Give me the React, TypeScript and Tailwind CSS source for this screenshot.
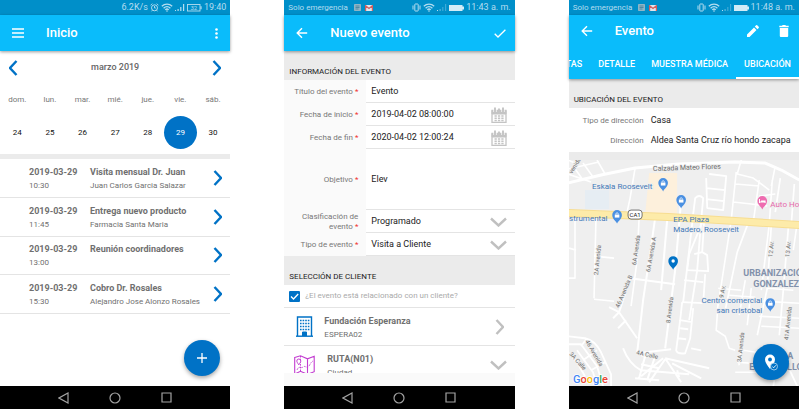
import React from "react";

type IconProps = { className?: string };

function Chevron({ className = "", dir = "right" }: IconProps & { dir?: "right" | "left" | "down" }) {
  const d = { right: "M1.5 1 8 8 1.5 15", left: "M7.5 1 1 8 7.5 15", down: "M1 1.5 8.5 8.5 16 1.5" }[dir];
  const box = dir === "down" ? "0 0 17 10" : "0 0 9 16";
  const size = dir === "down" ? "h-2.5 w-[17px]" : "h-4 w-[9px]";
  return (
    <svg viewBox={box} className={`${size} shrink-0 ${className}`} fill="none" stroke="currentColor" strokeWidth="2.4" aria-hidden="true">
      <path d={d} />
    </svg>
  );
}

function Wifi() {
  return (
    <svg viewBox="0 0 12 9" className="h-[9px] w-3" fill="none" stroke="currentColor" aria-hidden="true">
      <path d="M.8 3.2C3.8.3 8.2.3 11.2 3.2M2.6 5.2c2-1.9 4.8-1.9 6.8 0M4.3 6.9c1-1 2.4-1 3.4 0" strokeWidth="1.3" />
      <circle cx="6" cy="8" r=".8" fill="currentColor" stroke="none" />
    </svg>
  );
}

function Signal({ level = 4 }: { level?: number }) {
  return (
    <svg viewBox="0 0 10 9" className="h-[9px] w-2.5" fill="currentColor" aria-hidden="true">
      <path d="M0 7h1v1H0z" />
      <path d="M2.5 6h1.2v2H2.5z" opacity={level > 1 ? 1 : 0.5} />
      <path d="M5.2 4h1.2v4H5.2z" opacity={level > 1 ? 1 : 0.35} />
      <path d="M8 1h1.2v7H8z" opacity={level > 1 ? 1 : 0.35} />
    </svg>
  );
}

function AlarmIcon() {
  return (
    <svg viewBox="0 0 9 9" className="size-[9px]" fill="none" stroke="currentColor" aria-hidden="true">
      <circle cx="4.5" cy="4.8" r="3" />
      <path d="M.6 2.2 2.4.7M8.4 2.2 6.6.7M4.5 3v2h1.4M2.4 7.2 1.6 8.3M6.6 7.2l.8 1.1" strokeWidth=".9" />
    </svg>
  );
}

function BatteryLow() {
  return (
    <svg viewBox="0 0 15 9" className="h-[9px] w-[15px]" aria-hidden="true">
      <rect x=".5" y="1.5" width="12.5" height="6.5" fill="none" stroke="currentColor" strokeWidth=".9" />
      <path d="M13.4 3.2h1.2v3h-1.2z" fill="currentColor" />
      <text x="6.8" y="6.9" fontSize="6" textAnchor="middle" fill="currentColor">32</text>
    </svg>
  );
}

function EmergencyStatus({ time }: { time: string }) {
  return (
    <div className="flex h-[15px] items-center bg-[#008fc9] pr-1 pl-1 text-[9px] text-[#b4ddf0]">
      <span className="text-[8px] whitespace-nowrap">Solo emergencia</span>
      <svg viewBox="0 0 7 7" className="ml-1.5 size-[7px]" aria-hidden="true">
        <rect width="7" height="7" rx=".8" fill="#8fb5c6" />
        <path d="M1.5 2h4M1.5 3.5h4M1.5 5h3" stroke="#3f7f9b" strokeWidth=".8" />
      </svg>
      <svg viewBox="0 0 8 6" className="ml-1 h-1.5 w-2" aria-hidden="true">
        <rect width="8" height="6" rx=".6" fill="#dfe7ee" />
        <path d="M.6 6V.7L4 3.5 7.4.7V6" fill="none" stroke="#d2605f" strokeWidth="1.2" />
      </svg>
      <span className="ml-auto flex items-center gap-0.5">
        <svg viewBox="0 0 9 9" className="size-[9px]" fill="none" stroke="currentColor" aria-hidden="true">
          <rect x="2.8" y="1" width="3.4" height="7" rx=".5" />
          <path d="M1 2.5v4M8 2.5v4" />
        </svg>
        <Wifi />
        <Signal level={1} />
        <svg viewBox="0 0 15 8" className="h-2 w-[15px]" fill="#d3ecf7" aria-hidden="true">
          <path d="M0 1h13.5v1.6H15v3h-1.5V7H0z" />
        </svg>
        <span className="text-[9px] whitespace-nowrap">{time}</span>
      </span>
    </div>
  );
}

function BackButton() {
  return (
    <button aria-label="Atrás" className="flex w-[36px] items-center justify-center">
      <svg viewBox="0 0 12 12" className="size-3" fill="none" stroke="currentColor" strokeWidth="1.4" aria-hidden="true">
        <path d="M11.2 6H1.4M6 1.2 1.2 6 6 10.8" />
      </svg>
    </button>
  );
}

function NavBar() {
  return (
    <nav className="flex h-[23px] shrink-0 items-center justify-center gap-10 bg-black text-[#a3a3a3]">
      <button aria-label="Volver">
        <svg viewBox="0 0 11 12" className="h-3 w-[11px]" fill="none" stroke="currentColor" strokeWidth="1.2"><path d="M10 1v10L1 6z" /></svg>
      </button>
      <button aria-label="Pantalla de inicio">
        <svg viewBox="0 0 12 12" className="size-3" fill="none" stroke="currentColor" strokeWidth="1.2"><circle cx="6" cy="6" r="5" /></svg>
      </button>
      <button aria-label="Recientes">
        <svg viewBox="0 0 11 11" className="size-[11px]" fill="none" stroke="currentColor" strokeWidth="1.2"><path d="M1 1h9v9H1z" /></svg>
      </button>
    </nav>
  );
}

function SectionTitle({ children }: { children: React.ReactNode }) {
  return (
    <h2 className="flex h-[29px] items-end bg-[#ebebeb] px-[5px] pb-0.5 text-[8px] leading-3 text-[#222]">{children}</h2>
  );
}

const days = [
  ["dom.", "24"], ["lun.", "25"], ["mar.", "26"], ["mié.", "27"], ["jue.", "28"], ["vie.", "29"], ["sáb.", "30"],
];

const events = [
  { time: "10:30", title: "Visita mensual Dr. Juan", who: "Juan Carlos Garcia Salazar" },
  { time: "11:45", title: "Entrega nuevo producto", who: "Farmacia Santa Maria" },
  { time: "13:00", title: "Reunión coordinadores", who: "" },
  { time: "15:30", title: "Cobro Dr. Rosales", who: "Alejandro Jose Alonzo Rosales" },
];

function HomeScreen() {
  return (
    <section className="flex min-w-0 flex-col">
      <div className="flex h-[15px] items-center justify-end gap-0.5 bg-[#008fc9] pr-1 text-[9px] text-[#b4ddf0]">
        <span>6.2K/s</span>
        <AlarmIcon />
        <Wifi />
        <Signal />
        <BatteryLow />
        <span>19:40</span>
      </div>
      <header className="relative flex h-9 items-center bg-[#0abcfb] text-white shadow-[0_1px_3px_rgba(0,0,0,0.4)]">
        <button aria-label="Menú" className="flex w-[36px] justify-center">
          <svg viewBox="0 0 12 10" className="h-2.5 w-3" stroke="currentColor" strokeWidth="1.3" aria-hidden="true">
            <path d="M0 1h12M0 5h12M0 9h12" />
          </svg>
        </button>
        <h1 className="ml-2.5 text-[13px] font-medium">Inicio</h1>
        <button aria-label="Más opciones" className="mr-3 ml-auto">
          <svg viewBox="0 0 3 11" className="h-[11px] w-[3px]" fill="currentColor" aria-hidden="true">
            <circle cx="1.5" cy="1.5" r="1.3" /><circle cx="1.5" cy="5.5" r="1.3" /><circle cx="1.5" cy="9.5" r="1.3" />
          </svg>
        </button>
      </header>
      <div className="flex h-[34px] items-center justify-between px-[9px] text-[#0072c6]">
        <button aria-label="Semana anterior"><Chevron dir="left" /></button>
        <h2 className="text-[9px] font-medium text-[#666]">marzo 2019</h2>
        <button aria-label="Semana siguiente"><Chevron /></button>
      </div>
      <div className="grid h-[69px] grid-cols-7 px-px">
        {days.map(([name, n]) => (
          <div key={n} className="flex flex-col items-center pt-[9px]">
            <span className="text-[8px] leading-3 text-[#777]">{name}</span>
            <button
              className={
                n === "29"
                  ? "mt-[10px] size-[33px] shrink-0 rounded-full bg-[#0072c6] text-[8px] text-white"
                  : "mt-[10px] size-[33px] shrink-0 rounded-full text-[8px] text-[#111]"
              }
            >
              {n}
            </button>
          </div>
        ))}
      </div>
      <div className="relative flex flex-1 flex-col border-t-5 border-[#ebebeb]">
        <ul className="grid h-[155px] grid-rows-4">
          {events.map((e) => (
            <li key={e.time} className="border-b border-[#e4e4e4]">
              <button className="flex h-full w-full items-center pr-2 pl-[29px] text-left whitespace-nowrap text-[#707070]">
                <span className="w-[61px] shrink-0 pt-0.5">
                  <strong className="block text-[9px] leading-[14px] font-bold">2019-03-29</strong>
                  <span className="block text-[8px] leading-[14px]">{e.time}</span>
                </span>
                <span className="min-w-0 flex-1 pt-0.5">
                  <strong className="block text-[9px] leading-[14px] font-bold">{e.title}</strong>
                  <span className="block h-[14px] text-[8px] leading-[14px]">{e.who}</span>
                </span>
                <Chevron className="text-[#0072c6]" />
              </button>
            </li>
          ))}
        </ul>
        <button
          aria-label="Agregar evento"
          className="absolute right-[10px] bottom-[10px] flex size-9 items-center justify-center rounded-full bg-[#0072c6] text-white shadow-[0_2px_4px_rgba(0,0,0,0.35)]"
        >
          <svg viewBox="0 0 10 10" className="size-2.5" stroke="currentColor" strokeWidth="1.3" aria-hidden="true"><path d="M5 0v10M0 5h10" /></svg>
        </button>
      </div>
      <NavBar />
    </section>
  );
}

function FieldLabel({ id, children }: { id: string; children: React.ReactNode }) {
  return (
    <label htmlFor={id} className="flex w-[82px] shrink-0 items-center justify-end bg-[#fafafa] pr-2 pl-1 text-right text-[8px] leading-[10px] text-[#777]">
      <span>{children} <span className="text-[#f03030]">*</span></span>
    </label>
  );
}

function CalendarIcon() {
  return (
    <svg viewBox="0 0 16 16" className="size-4" fill="none" stroke="#c4c4c4" aria-hidden="true">
      <path d="M1 3.5h14v12H1z" strokeWidth="1.3" />
      <path d="M1 3.5h14V7H1z" fill="#c4c4c4" />
      <path d="M4 .5V5M12 .5V5" stroke="#fff" strokeWidth="3.2" />
      <path d="M4 .5V5M12 .5V5M8 1.5v3" strokeWidth="1.9" />
      <path d="M3.5 9h2.3M6.9 9h2.3M10.3 9h2.3M3.5 11.3h2.3M6.9 11.3h2.3M10.3 11.3h2.3M3.5 13.6h2.3M6.9 13.6h2.3M10.3 13.6h2.3" strokeWidth="1.5" />
    </svg>
  );
}

const valueClass = "w-full min-w-0 flex-1 appearance-none bg-transparent p-0 text-[9px] text-[#222] outline-none";
const valueCellClass = "flex min-w-0 flex-1 items-center border-b border-[#e4e4e4] pt-0.5 pr-2 pl-[5px]";

function DateRow({ id, label, value }: { id: string; label: string; value: string }) {
  return (
    <div className="flex h-[23px]">
      <FieldLabel id={id}>{label}</FieldLabel>
      <div className={valueCellClass}>
        <input id={id} defaultValue={value} className={valueClass} />
        <button type="button" aria-label={"Elegir " + label.toLowerCase()}><CalendarIcon /></button>
      </div>
    </div>
  );
}

function SelectRow({ id, label, value }: { id: string; label: string; value: string }) {
  return (
    <div className="flex h-[23px]">
      <FieldLabel id={id}>{label}</FieldLabel>
      <div className={valueCellClass}>
        <select id={id} className={valueClass}>
          <option>{value}</option>
        </select>
        <Chevron dir="down" className="text-[#c0c0c0]" />
      </div>
    </div>
  );
}

function NewEventScreen() {
  return (
    <section className="flex min-w-0 flex-col">
      <EmergencyStatus time="11:43 a. m." />
      <header className="relative flex h-9 items-center bg-[#0abcfb] text-white shadow-[0_1px_3px_rgba(0,0,0,0.4)]">
        <BackButton />
        <h1 className="ml-2.5 text-[13px] font-medium">Nuevo evento</h1>
        <button aria-label="Guardar" className="mr-[9px] ml-auto">
          <svg viewBox="0 0 12 9" className="h-[9px] w-3" fill="none" stroke="currentColor" strokeWidth="1.3" aria-hidden="true"><path d="M.7 4.8 4 8 11.4.8" /></svg>
        </button>
      </header>
      <SectionTitle>INFORMACIÓN DEL EVENTO</SectionTitle>
      <form>
        <div className="flex h-[23px]">
          <FieldLabel id="titulo">Título del evento</FieldLabel>
          <div className={valueCellClass}>
            <input id="titulo" defaultValue="Evento" className={valueClass} />
          </div>
        </div>
        <DateRow id="inicio" label="Fecha de inicio" value="2019-04-02 08:00:00" />
        <DateRow id="fin" label="Fecha de fin" value="2020-04-02 12:00:24" />
        <div className="flex h-[61px]">
          <FieldLabel id="objetivo">Objetivo</FieldLabel>
          <div className={valueCellClass}>
            <textarea id="objetivo" rows={1} defaultValue="Elev" className={valueClass + " resize-none"} />
          </div>
        </div>
        <SelectRow id="clasificacion" label="Clasificación de evento" value="Programado" />
        <SelectRow id="tipo" label="Tipo de evento" value="Visita a Cliente" />
        <SectionTitle>SELECCIÓN DE CLIENTE</SectionTitle>
        <label className="flex h-[23px] items-center gap-[5px] border-b border-[#e4e4e4] px-[5px] text-[8px] text-[#aaa]">
          <span className="grid">
            <input type="checkbox" defaultChecked className="col-start-1 row-start-1 size-[11px] appearance-none rounded-[1px] bg-[#0072c6]" />
            <svg viewBox="0 0 11 11" className="pointer-events-none col-start-1 row-start-1 size-[11px]" fill="none" stroke="#fff" strokeWidth="1.3" aria-hidden="true"><path d="M2 5.5 4.5 8 9.2 3" /></svg>
          </span>
          ¿El evento está relacionado con un cliente?
        </label>
      </form>
      <button className="flex h-[38px] items-center border-b border-[#e4e4e4] pr-[11px] pl-3 text-left text-[#707070]">
        <svg viewBox="0 0 17 21" className="h-[21px] w-[17px]" fill="none" stroke="#0072c6" aria-hidden="true">
          <path d="M1.5 20V1h14v19" strokeWidth="1.4" />
          <path d="M0 20.2h17" strokeWidth="1.4" />
          <path d="M4 4.5h9.5M4 7.5h9.5M4 10.5h9.5M4 13.5h9.5" strokeWidth="1.6" strokeDasharray="1.6 1" />
          <path d="M6.5 20v-4h4v4" fill="#0072c6" />
        </svg>
        <span className="ml-[11px] flex-1 pt-0.5">
          <strong className="block text-[9px] leading-[14px] font-bold">Fundación Esperanza</strong>
          <span className="block text-[8px] leading-[14px]">ESPERA02</span>
        </span>
        <Chevron className="text-[#c0c0c0]" />
      </button>
      <div className="h-[27px] overflow-hidden">
        <button className="flex h-[38px] w-full items-center pr-2 pl-2.5 text-left text-[#707070]">
          <svg viewBox="0 0 21 20" className="h-5 w-[21px]" fill="none" stroke="#c23bd0" aria-hidden="true">
            <path d="M.7 2.5 6.5.8l7 3 6.7-2.6v15.5l-6.7 2.6-7-3L.7 19zM13.5 4v15" strokeWidth="1.1" />
            <path d="M6.5 1v15" strokeDasharray="1.5 1.2" />
            <path d="M4.8 9.8C3.3 7.6 2.8 6.8 2.8 6a2 2 0 0 1 4 0c0 .8-.5 1.6-2 3.8z" fill="#fff" />
            <path d="M3 15c2-5 4-1 6-3s4 2 6-1 2-4 4-5" strokeWidth=".8" strokeDasharray="1.8 1" />
          </svg>
          <span className="ml-3 flex-1 pt-0.5">
            <strong className="block text-[9px] leading-[14px] font-bold">RUTA(N01)</strong>
            <span className="block text-[8px] leading-[14px]">Ciudad</span>
          </span>
          <Chevron dir="down" className="text-[#c0c0c0]" />
        </button>
      </div>
      <div className="flex-1 bg-[#fafafa]" />
      <NavBar />
    </section>
  );
}

function Pin({ x, y, color, kind = "bag" }: { x: number; y: number; color: string; kind?: "bag" | "bed" | "dot" }) {
  return (
    <g transform={`translate(${x} ${y})`}>
      <path d="M0 7.5C-.8 4.8-4.8 3-4.8-1.2a4.8 4.8 0 0 1 9.6 0C4.8 3 .8 4.8 0 7.5z" fill={color} />
      {kind === "bag" && <><path d="M-2.3-1.5h4.6v3h-4.6z" fill="#fff" /><path d="M-1.2-1.5v-.6a1.2 1.2 0 0 1 2.4 0v.6" fill="none" stroke="#fff" strokeWidth=".7" /></>}
      {kind === "bed" && <path d="M-2.8-3v4M-2.8 0h5.6v1M-1.2-1h4v1.2" fill="none" stroke="#fff" strokeWidth="1" />}
      {kind === "dot" && <circle cy="-1.2" r="1.7" fill="#fff" />}
    </g>
  );
}

function CityMap() {
  return (
    <svg viewBox="0 0 230 226" preserveAspectRatio="xMinYMin slice" className="block h-[226px] w-full bg-[#efefef]" role="img" aria-label="Mapa de la ubicación">
      <path d="M80 13h28v42H76z" fill="#fdf0dc" />
      <path d="M16 30h24v19H16z" fill="#e6edf3" />
      <g fill="none" stroke="#fff" strokeLinejoin="round">
        <path d="M-1 23 32 15 66 8 109 4 166 2 196 3 212 10 230 20" strokeWidth="3" />
        <path d="M66 8 61 38 58 52M-1 9 30 2M-1 14 22 22M4 6 14 20M14 3 24 17M28 0 36 14M8 4-1 0" strokeWidth="1.6" />
        <path d="M27 56 25 138M25 96 45 98M25 139 45 141M6 56 6 118-1 118M70 58 68 100 62 146M0 88 7 90" strokeWidth="1.6" />
        <path d="M86 58 80 100 74 140 68 193 77 197M98 60 92 130M112 40 106 110 96 188" strokeWidth="2" />
        <path d="M124 55 114 142M124 54 126 38Q130 34 134 38L132 60M132 60 128 110 120 160M137 18 138 48 154 50 157 16 140 14M137 28 156 30M137 39 155 41" strokeWidth="1.8" />
        <path d="M167 12 162 60 150 138M190 20 184 62M203 20 200 64 192 130M172 0 168 14 184 18 200 30M166 24 190 26M164 42 182 44M182 44 198 46M190 36 206 34M206 6 202 26" strokeWidth="1.6" />
        <path d="M134 60 120 94 118 110 139 111 138 95 133 92 125 94M133 92 135 60M113 142 134 143 136 114M115 120 134 122" strokeWidth="1.8" />
        <path d="M202 65 198 128 188 175M219 68 214 130 210 175M180 60 168 92 156 150M211 18 206 52M225 24 222 64" strokeWidth="1.7" />
        <path d="M61 118 106 124M40 147 50 152 68 178M50 152 61 118M50 152 44 158M57 160 49 168" strokeWidth="2" />
        <path d="M68 193 102 189M54 188Q60 204 72 210L120 214M76 196 70 218M86 196 78 220M94 198 72 216M96 198 112 222M96 198 140 208M103 203 132 218M72 204 90 208M66 218 90 220M96 199 80 222M108 210 110 217" strokeWidth="2" />
        <path d="M111 160 107 190Q108 194 116 193L121 178 124 148M111 160 123 162M111 168 119 169M109 178 117 179M113 142 111 160M122 188 132 190" strokeWidth="1.8" />
        <path d="M149 140 147 170 156 176 160 188 166 190M152 126 148 150M149 128 172 130M182 128 178 165M170 155 176 120M176 140 230 143M190 156 230 158M192 166 230 168M170 205Q168 196 174 190L200 194M166 212 200 212M168 202 198 204M228 62 224 90M160 135 186 137M198 128 224 130" strokeWidth="1.6" />
        <path d="M-1 176 16 178Q26 180 32 192L42 214 42 226M-1 184 12 184 28 206 34 226M8 190 24 212 28 226M-1 192 8 202 16 216M18 178 12 186M28 190 14 200M36 202 22 210M212 192 228 226M206 214 204 226" strokeWidth="1.8" />
      </g>
      <path d="M-1 53 99 57 166 61 230 65" fill="none" stroke="#f7dd91" strokeWidth="8" />
      <path d="M-1 53 99 57 166 61 230 65" fill="none" stroke="#fdeba9" strokeWidth="6" />
      <g fontSize="6" fill="#6b6b6b" stroke="#efefef" strokeWidth="1.5" paintOrder="stroke">
        <text transform="translate(84 11) rotate(-2)" fontSize="7">Calzada Mateo Flores</text>
        <text transform="translate(3 14) rotate(-58)">venida</text>
        <text transform="translate(29 115) rotate(-84)">2A Avenida</text>
        <text transform="translate(67 105) rotate(-82)">6A Avenida</text>
        <text transform="translate(81 112) rotate(-80)">6A Avenida A</text>
        <text transform="translate(50 148) rotate(-67)">46 Avenida B</text>
        <text transform="translate(101 163) rotate(-83)">8 Avenida</text>
        <text transform="translate(203 97) rotate(-84)">12 Av.</text>
        <text transform="translate(220 97) rotate(-84)">13 Av.</text>
        <text transform="translate(154 138) rotate(-78)">9 Av.</text>
        <text transform="translate(172 202) rotate(-84)">3A Avenida</text>
        <text transform="translate(219 180) rotate(-84)">41A Avenida</text>
        <text transform="translate(67 194) rotate(12)">4A Calle</text>
        <text transform="translate(16 181) rotate(60)">46 Avenida</text>
        <text transform="translate(0 194) rotate(48)">3A Calle</text>
      </g>
      <g fontSize="8" fill="#4378b8" stroke="#efefef" strokeWidth="2" paintOrder="stroke">
        <text x="23" y="29">Eskala Roosevelt</text>
        <text x="0" y="61" stroke="none">strumental</text>
        <text x="104" y="62" stroke="none">EPA Plaza</text>
        <text x="104" y="72">Madero, Roosevelt</text>
        <text x="193" y="143" textAnchor="end">Centro comercial</text>
        <text x="193" y="153" textAnchor="end">san cristobal</text>
        <text x="201" y="47" fill="#e668ab">Auto Hotel</text>
      </g>
      <g fontSize="9" fontWeight="700" fill="#8291ab" stroke="#efefef" strokeWidth="1.5" paintOrder="stroke">
        <text x="174" y="116">URBANIZACIÓN</text>
        <text x="184" y="127">GONZALEZ</text>
        <text x="218" y="199">A</text>
        <text x="180" y="210">EL CASTILLO</text>
      </g>
      <rect x="59" y="50" width="14" height="9" rx="3" fill="#fff" stroke="#555" strokeWidth=".8" />
      <text x="66" y="57" fontSize="6" textAnchor="middle" fill="#222">CA1</text>
      <Pin x={94} y={24} color="#4a90e2" />
      <Pin x={112} y={41} color="#4a90e2" />
      <Pin x={48} y={56} color="#4a90e2" />
      <Pin x={201} y={144} color="#4a90e2" />
      <Pin x={193} y={42} color="#ee6cb0" kind="bed" />
      <Pin x={104} y={102} color="#0072c6" kind="dot" />
      <text x="4" y="223" fontSize="11" fontWeight="500" stroke="#fff" strokeWidth="1.5" paintOrder="stroke">
        <tspan fill="#4285f4">G</tspan><tspan fill="#ea4335">o</tspan><tspan fill="#fbbc05">o</tspan><tspan fill="#4285f4">g</tspan><tspan fill="#34a853">l</tspan><tspan fill="#ea4335">e</tspan>
      </text>
    </svg>
  );
}

function EventScreen() {
  return (
    <section className="flex min-w-0 flex-col">
      <EmergencyStatus time="11:48 a. m." />
      <div className="relative bg-[#0abcfb] text-white shadow-[0_1px_3px_rgba(0,0,0,0.4)]">
        <header className="flex h-8 items-center">
          <BackButton />
          <h1 className="ml-2.5 text-[13px] font-medium">Evento</h1>
          <button aria-label="Editar" className="ml-auto">
            <svg viewBox="0 0 12 12" className="size-3" fill="currentColor" aria-hidden="true"><path d="M0 9.5V12h2.5l7-7L7 2.5zM11.7 2.9a.8.8 0 0 0 0-1.1L10.2.3a.8.8 0 0 0-1.1 0L7.8 1.6l2.6 2.6z" /></svg>
          </button>
          <button aria-label="Eliminar" className="mr-2.5 ml-5">
            <svg viewBox="0 0 10 12" className="h-3 w-2.5" fill="currentColor" aria-hidden="true"><path d="M.8 3h8.4v8a1 1 0 0 1-1 1H1.8a1 1 0 0 1-1-1zM.3.8H3L3.7 0h2.6L7 .8h2.7v1.5H.3z" /></svg>
          </button>
        </header>
        <div role="tablist" className="flex h-8 justify-end overflow-hidden text-[9px] font-medium whitespace-nowrap">
          <button role="tab" className="shrink-0 px-2 pt-1">VISITAS</button>
          <button role="tab" className="shrink-0 px-2 pt-1">DETALLE</button>
          <button role="tab" className="shrink-0 px-2 pt-1">MUESTRA MÉDICA</button>
          <button role="tab" aria-selected="true" className="shrink-0 border-y-2 border-t-transparent border-b-white px-2 pt-1">UBICACIÓN</button>
        </div>
      </div>
      <SectionTitle>UBICACIÓN DEL EVENTO</SectionTitle>
      <dl className="grid h-11 grid-cols-[75px_1fr] grid-rows-2 items-center gap-x-[7px] pt-[3px] pb-px whitespace-nowrap">
        <dt className="text-right text-[8px] text-[#777]">Tipo de dirección</dt>
        <dd className="text-[9px] text-[#222]">Casa</dd>
        <dt className="text-right text-[8px] text-[#777]">Dirección</dt>
        <dd className="text-[9px] text-[#222]">Aldea Santa Cruz río hondo zacapa</dd>
      </dl>
      <div className="relative flex-1 border-t-8 border-[#ebebeb]">
        <CityMap />
        <button
          aria-label="Confirmar ubicación"
          className="absolute right-[10px] bottom-[6px] flex size-9 items-center justify-center rounded-full bg-[#0072c6] text-white shadow-[0_2px_4px_rgba(0,0,0,0.35)]"
        >
          <svg viewBox="0 0 14 17" className="h-[17px] w-3.5" aria-hidden="true">
            <path d="M6 15C3.5 11.5 1 8.5 1 5.5a5 5 0 0 1 10 0C11 8.5 8.5 11.5 6 15z" fill="#fff" />
            <circle cx="6" cy="5.5" r="1.9" fill="#0072c6" />
            <circle cx="10" cy="12.5" r="3.5" fill="#0072c6" stroke="#b9dcf3" strokeWidth=".8" />
            <path d="m8.3 12.5 1.3 1.3 2.3-2.5" fill="none" stroke="#fff" strokeWidth=".9" />
          </svg>
        </button>
      </div>
      <NavBar />
    </section>
  );
}

export default function App() {
  return (
    <main className="grid min-h-screen grid-cols-3 gap-x-[54px] bg-white font-[Roboto,'Noto_Sans',sans-serif]">
      <HomeScreen />
      <NewEventScreen />
      <EventScreen />
    </main>
  );
}
